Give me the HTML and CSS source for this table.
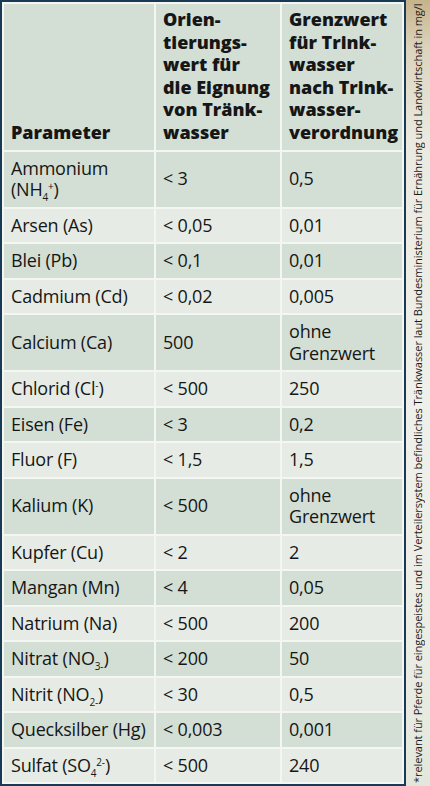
FILE: index.html
```html
<!DOCTYPE html>
<html lang="de">
<head>
<meta charset="utf-8">
<title>Tränkwasser Parameter</title>
<link rel="stylesheet" href="styles.css">
</head>
<body>
<div class="page">
  <div class="frame">
    <table class="tbl">
      <colgroup>
        <col class="c1"><col class="c2"><col class="c3">
      </colgroup>
      <thead>
        <tr>
          <th>Parameter</th>
          <th>Orien-<br>tierungs-<br>wert für<br>die Eignung<br>von Tränk-<br>wasser</th>
          <th>Grenzwert<br>für Trink-<br>wasser<br>nach Trink-<br>wasser-<br>verordnung</th>
        </tr>
      </thead>
      <tbody>
        <tr class="dk"><td>Ammonium<br>(NH<span class="lo">4</span><span class="hi">+</span>)</td><td>&lt; 3</td><td>0,5</td></tr>
        <tr class="lt"><td>Arsen (As)</td><td>&lt; 0,05</td><td>0,01</td></tr>
        <tr class="dk"><td>Blei (Pb)</td><td>&lt; 0,1</td><td>0,01</td></tr>
        <tr class="lt"><td>Cadmium (Cd)</td><td>&lt; 0,02</td><td>0,005</td></tr>
        <tr class="dk"><td>Calcium (Ca)</td><td>500</td><td>ohne<br>Grenzwert</td></tr>
        <tr class="lt"><td>Chlorid (Cl<span class="hi">-</span>)</td><td>&lt; 500</td><td>250</td></tr>
        <tr class="dk"><td>Eisen (Fe)</td><td>&lt; 3</td><td>0,2</td></tr>
        <tr class="lt"><td>Fluor (F)</td><td>&lt; 1,5</td><td>1,5</td></tr>
        <tr class="dk"><td>Kalium (K)</td><td>&lt; 500</td><td>ohne<br>Grenzwert</td></tr>
        <tr class="lt"><td>Kupfer (Cu)</td><td>&lt; 2</td><td>2</td></tr>
        <tr class="dk"><td>Mangan (Mn)</td><td>&lt; 4</td><td>0,05</td></tr>
        <tr class="lt"><td>Natrium (Na)</td><td>&lt; 500</td><td>200</td></tr>
        <tr class="dk"><td>Nitrat (NO<span class="lo">3-</span>)</td><td>&lt; 200</td><td>50</td></tr>
        <tr class="lt"><td>Nitrit (NO<span class="lo">2-</span>)</td><td>&lt; 30</td><td>0,5</td></tr>
        <tr class="dk"><td>Quecksilber (Hg)</td><td>&lt; 0,003</td><td>0,001</td></tr>
        <tr class="lt"><td>Sulfat (SO<span class="lo">4</span><span class="hi">2-</span>)</td><td>&lt; 500</td><td>240</td></tr>
      </tbody>
    </table>
  </div>
  <aside class="strip">
    <div class="note">*relevant für Pferde für eingespeistes und im Verteilersystem befindliches Tränkwasser laut Bundesministerium für Ernährung und Landwirtschaft in mg/l</div>
  </aside>
</div>
</body>
</html>
```

FILE: styles.css
```css
html, body {
  margin: 0;
  padding: 0;
  background: #eef0ea;
}

.page {
  display: flex;
  width: 430px;
  height: 786px;
  overflow: hidden;
  font-family: "Open Sans", "Noto Sans", sans-serif;
  color: #161616;
}

.frame {
  width: 402px;
  flex: 0 0 auto;
  border: 2px solid #183a55;
  background: #f4f6f2;
  overflow: hidden;
}

.tbl {
  width: 100%;
  border-collapse: separate;
  border-spacing: 2px;
  table-layout: fixed;
}

.c1 { width: 150px; }
.c2 { width: 124px; }
.c3 { width: auto; }

.tbl th,
.tbl td {
  text-align: left;
  padding: 6px 4px 6px 7px;
  font-size: 18px;
  font-stretch: 95%;
  line-height: 21.5px;
  vertical-align: middle;
  letter-spacing: -0.2px;
  white-space: nowrap;
}

.tbl th {
  background: #d3dfd5;
  font-weight: 800;
  font-size: 18px;
  font-stretch: 88%;
  line-height: 22.5px;
  padding-top: 4px;
  padding-bottom: 6.5px;
  vertical-align: bottom;
  letter-spacing: 0;
}

.tbl tr.dk td { background: #d3dfd5; }
.tbl tr.lt td { background: #e6ece5; }

.lo,
.hi {
  display: inline-block;
  font-size: 10px;
  line-height: 10px;
  position: relative;
}

.lo { top: 5px; }
.hi { top: -6px; }

.strip {
  flex: 1 1 auto;
  overflow: hidden;
  background: linear-gradient(to bottom, #c6b38b 0%, #dcd3bc 6%, #ebeae1 18%, #eff0ea 50%, #eceee6 80%, #e3e7db 100%);
  display: flex;
  justify-content: center;
  align-items: flex-end;
}

.note {
  writing-mode: vertical-rl;
  transform: rotate(180deg);
  white-space: nowrap;
  font-size: 11.1px;
  font-stretch: 89%;
  font-weight: 500;
  line-height: 16px;
  letter-spacing: -0.1px;
  color: #1b1b1b;
  padding-top: 3px;
  height: 783px;
}
```
